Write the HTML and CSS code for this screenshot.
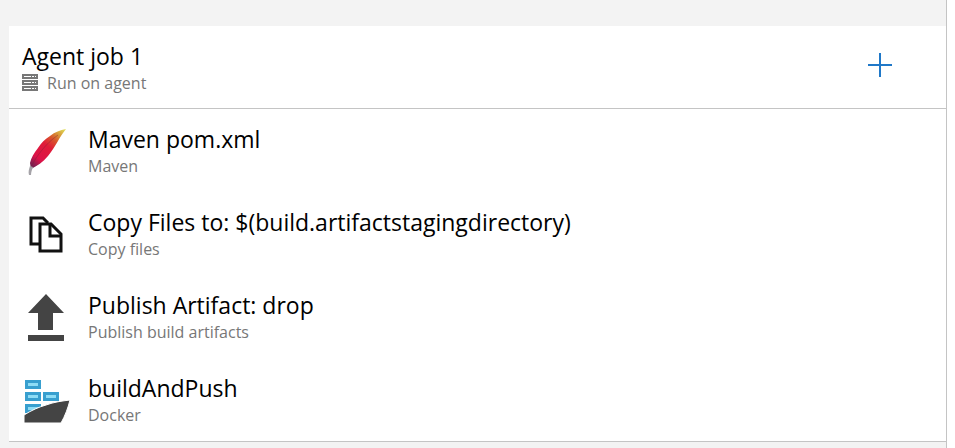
FILE: index.html
```html
<!DOCTYPE html>
<html lang="en">

<head>
    <meta charset="UTF-8">
    <meta name="viewport" content="width=device-width, initial-scale=1.0">
    <title>Agent job 1</title>
    <link rel="stylesheet" href="styles.css">
</head>

<body>
    <div class="pane">
        <div class="job">
            <div class="job-head">
                <div class="text">
                    <h2>Agent job 1</h2>
                    <p>
                        <svg class="server" viewBox="0 0 16 18">
                            <path fill="#777" d="M0 0h16v5H0zM0 6h16v5H0zM0 12h16v5H0z" />
                            <path fill="#fff" d="M2 2h7v1H2zM10 2h2v1h-2zM13 2h1v1h-1zM2 8h7v1H2zM10 8h2v1h-2zM13 8h1v1h-1zM2 14h7v1H2zM10 14h2v1h-2zM13 14h1v1h-1z" />
                        </svg>
                        <span>Run on agent</span>
                    </p>
                </div>
                <button class="add" type="button" aria-label="Add a task">
                    <svg viewBox="0 0 24 24">
                        <path fill="#1f78c8" d="M0 11h24v2H0zM11 0h2v24h-2z" />
                    </svg>
                </button>
            </div>
            <ul class="tasks">
                <li>
                    <svg class="icon" viewBox="0 0 48 48">
                        <defs>
                            <linearGradient id="feather" gradientUnits="userSpaceOnUse" x1="9" y1="43" x2="43" y2="2">
                                <stop offset="0" stop-color="#54204f" />
                                <stop offset=".12" stop-color="#8c1d50" />
                                <stop offset=".25" stop-color="#dc1248" />
                                <stop offset=".55" stop-color="#e01c38" />
                                <stop offset=".72" stop-color="#d8572c" />
                                <stop offset=".86" stop-color="#d8a03c" />
                                <stop offset="1" stop-color="#dfe05a" />
                            </linearGradient>
                        </defs>
                        <path fill="url(#feather)" d="M44 2C38 3 33 5 28 9C23 12 19 16 16 21C12 26 9 31 8 36L9 42C15 39 21 35 26 29C30 24 33 19 36 14C38 10 41 6 44 2z" />
                        <path fill="none" stroke="#7a2034" stroke-opacity=".4" d="M9 40C14 30 23 17 36 8" />
                        <path fill="#a5a3a8" d="M8 39l3 1c-1 3-2 5-2 8H7c-1-3 0-6 1-9z" />
                    </svg>
                    <div class="text">
                        <h3>Maven pom.xml</h3>
                        <p>Maven</p>
                    </div>
                </li>
                <li>
                    <svg class="icon" viewBox="0 0 48 48">
                        <g fill="none" stroke="#111" stroke-width="3">
                            <path d="M18 34H9V8h12l5 5" />
                            <path fill="#fff" d="M18 14h11l10 10v17H18z" />
                            <path d="M28 14v12h11" />
                        </g>
                    </svg>
                    <div class="text">
                        <h3>Copy Files to: $(build.artifactstagingdirectory)</h3>
                        <p>Copy files</p>
                    </div>
                </li>
                <li>
                    <svg class="icon" viewBox="0 0 48 48">
                        <path fill="#444" d="M24 1l18 19H31v17H16V20H6zM6 42h36v6H6z" />
                    </svg>
                    <div class="text">
                        <h3>Publish Artifact: drop</h3>
                        <p>Publish build artifacts</p>
                    </div>
                </li>
                <li>
                    <svg class="icon" viewBox="0 0 48 48">
                        <path fill="#389fcf" d="M3 4h16v9H3zM3 16h16v9H3zM21 16h16v9H21zM3 28h16v9H3z" />
                        <path fill="#8edcf5" d="M6 7h10v3H6zM6 19h10v3H6zM24 19h10v3H24zM6 31h10v3H6z" />
                        <path fill="#444" stroke="#fff" d="M2 39C10 34 17 31 24 29C32 26 40 25 48 24C46 32 43 40 39 47H2z" />
                    </svg>
                    <div class="text">
                        <h3>buildAndPush</h3>
                        <p>Docker</p>
                    </div>
                </li>
            </ul>
        </div>
    </div>
</body>

</html>
```
FILE: styles.css
```css
* {
    box-sizing: border-box;
}

body {
    margin: 0;
    background-color: #fff;
    font-family: "Segoe UI", "Open Sans", "Noto Sans", sans-serif;
    color: #000;
}

.pane {
    min-height: 100vh;
    margin-right: 8px;
    padding: 26px 0 6px 9px;
    background-color: #f3f3f3;
    border-right: 1px solid #c4c4c4;
}

.job {
    background-color: #fff;
    border-bottom: 1px solid #c4c4c4;
}

.job-head {
    display: flex;
    align-items: flex-start;
    justify-content: space-between;
    padding: 15px 54px 14px 13px;
    border-bottom: 1px solid #c4c4c4;
}

h2,
h3,
p {
    margin: 0;
    font-weight: 400;
}

h2,
h3 {
    font-size: 23px;
    line-height: 30px;
}

p {
    display: flex;
    align-items: center;
    margin-top: 1px;
    font-size: 16px;
    line-height: 22px;
    color: #777;
}

.server {
    width: 16px;
    height: 18px;
    margin-right: 9px;
}

.add {
    margin-top: 12px;
    padding: 0;
    border: 0;
    background: none;
    cursor: pointer;
}

.add svg {
    display: block;
    width: 24px;
    height: 24px;
}

.tasks {
    margin: 0;
    padding: 0;
    list-style: none;
}

.tasks li {
    display: flex;
    align-items: center;
    padding: 15px 13px;
}

.icon {
    flex: none;
    width: 48px;
    height: 48px;
    margin-right: 18px;
}
```
